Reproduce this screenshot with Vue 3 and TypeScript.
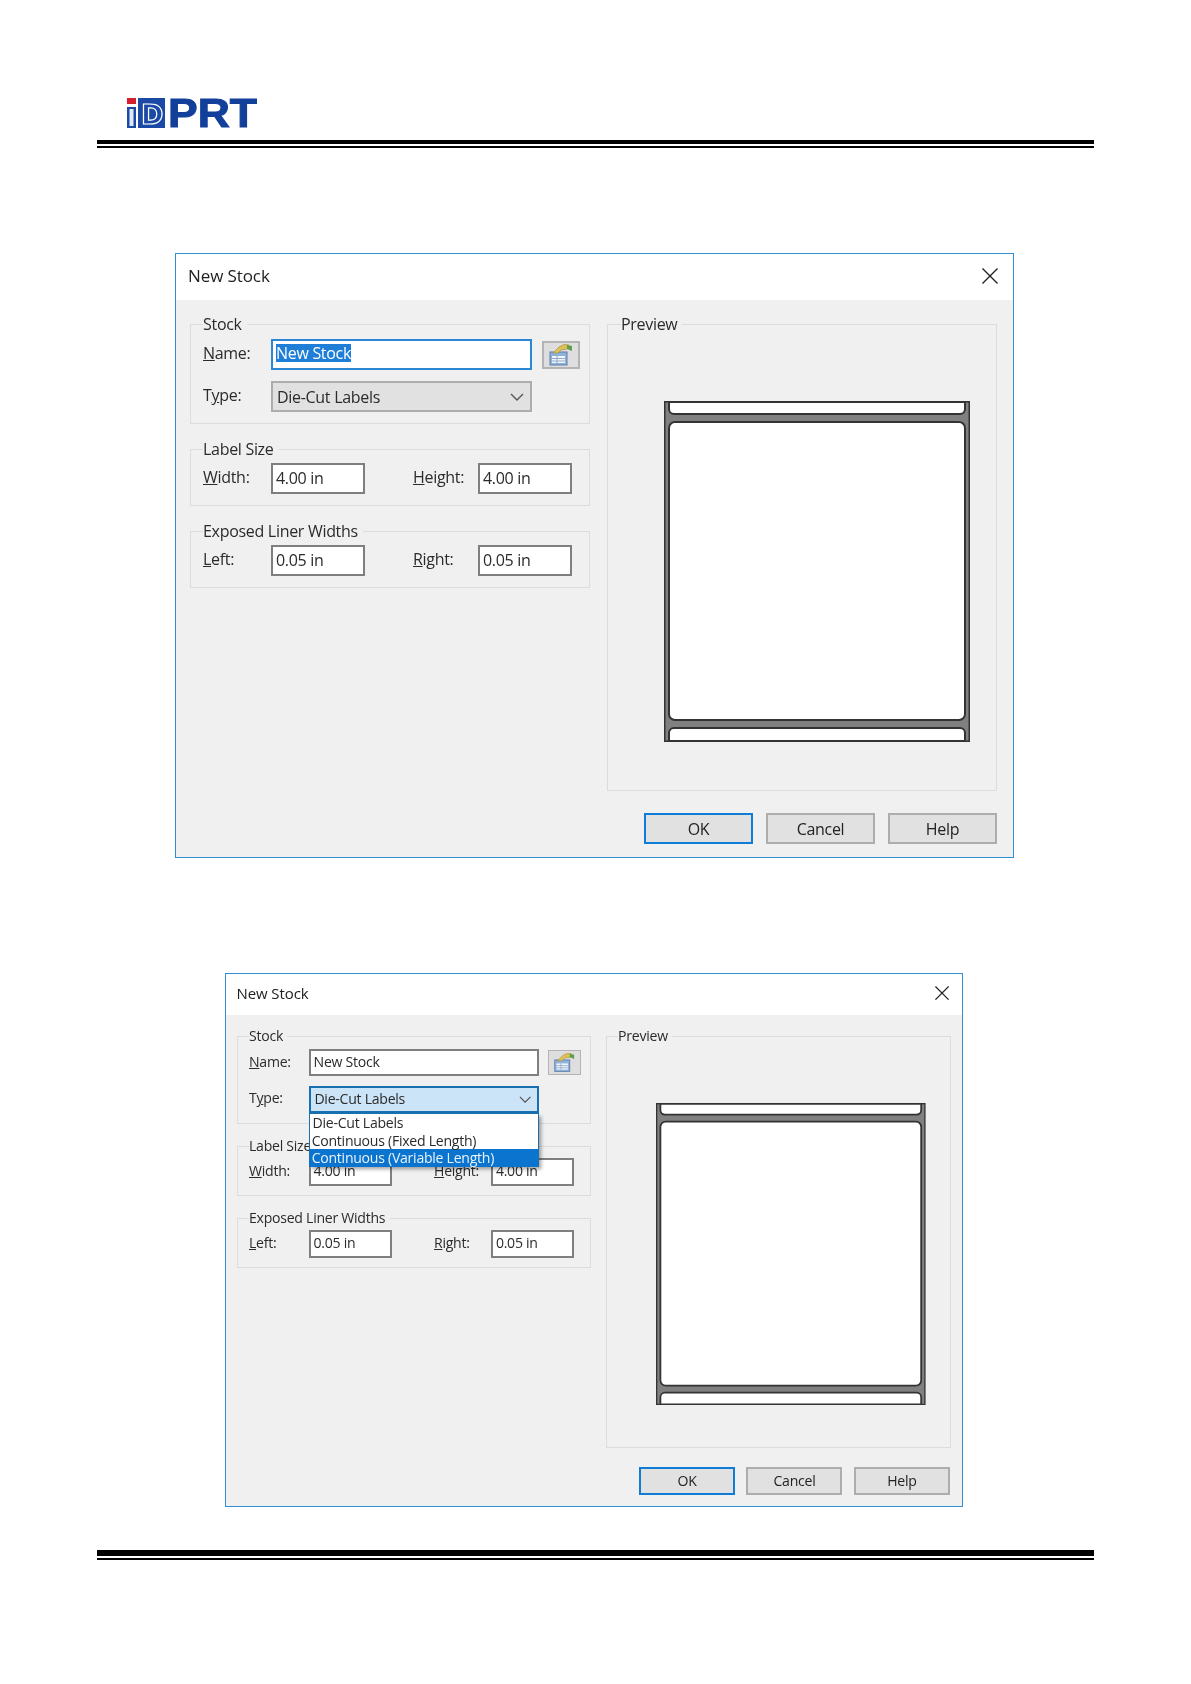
<script setup lang="ts">
interface DialogCfg { key: string; open: boolean }
const dialogs: DialogCfg[] = [
  { key: 'large', open: false },
  { key: 'small', open: true },
]
const sizeFields = [
  { title: 'Label Size', a: 'W', aRest: 'idth:', b: 'H', bRest: 'eight:', val: '4.00 in' },
  { title: 'Exposed Liner Widths', a: 'L', aRest: 'eft:', b: 'R', bRest: 'ight:', val: '0.05 in' },
]
</script>

<template>
  <div class="page">
    <header class="head">
      <svg class="logo" width="132" height="32" viewBox="0 0 132 32">
        <rect x="1" y="1" width="9" height="6" fill="#d3202c" />
        <rect x="1" y="10" width="9" height="21" fill="#1a4aa5" />
        <rect x="3.5" y="12" width="4" height="17" fill="#dfe8f6" />
        <rect x="12" y="1" width="27" height="30" fill="#1a4aa5" />
        <text x="15" y="27" class="logo-d">D</text>
        <text x="42" y="30" class="logo-prt" textLength="89" lengthAdjust="spacingAndGlyphs">PRT</text>
      </svg>
      <div class="rule-thick"></div>
      <div class="rule-thin"></div>
    </header>

    <div v-for="d in dialogs" :key="d.key" class="slot" :class="'slot-' + d.key">
      <section class="dialog" :class="'dialog-' + d.key">
        <div class="titlebar">
          <span class="title">New Stock</span>
          <svg class="close" width="16" height="16" viewBox="0 0 16 16">
            <path d="M0.5 0.5 L15.5 15.5 M15.5 0.5 L0.5 15.5" stroke="#222" stroke-width="1.4" fill="none" />
          </svg>
        </div>
        <div class="body">
          <div class="left">
            <div class="group group-stock">
              <div class="legend">Stock</div>
              <div class="stock-grid">
                <div class="lbl"><u>N</u>ame:</div>
                <div class="field" :class="{ focused: !d.open }">
                  <span :class="{ sel: !d.open }">New Stock</span>
                </div>
                <button class="iconbtn" type="button" aria-label="Properties">
                  <svg width="26" height="24" viewBox="0 0 26 24">
                    <rect x="2" y="9" width="17" height="13" fill="#8fb2dc" stroke="#5d7ea8" />
                    <rect x="4" y="13" width="13" height="7" fill="#f2f6fb" />
                    <path d="M4 15.5H17M4 18H17M9 13V20" stroke="#8fa9c9" stroke-width="1" />
                    <path d="M5 10 L11 4 Q16 0 21 2 L19 6 L13 7 L10 10 Z" fill="#dcc05a" stroke="#a88a2a" stroke-width="0.6" />
                    <path d="M19 2 L24 3 L24 8 L19 6 Z" fill="#5f9e4a" />
                  </svg>
                </button>
                <div class="lbl">T<u>y</u>pe:</div>
                <div class="combo-wrap">
                  <div class="combo" :class="{ 'combo-open': d.open }">
                    <span>Die-Cut Labels</span>
                    <svg width="14" height="8" viewBox="0 0 14 8">
                      <path d="M1 1 L7 7 L13 1" stroke="#555" stroke-width="1.4" fill="none" />
                    </svg>
                  </div>
                  <ul v-if="d.open" class="menu">
                    <li class="first">Die-Cut Labels</li>
                    <li>Continuous (Fixed Length)</li>
                    <li class="active">Continuous (Variable Length)</li>
                  </ul>
                </div>
              </div>
            </div>

            <div v-for="g in sizeFields" :key="g.title" class="group group-size">
              <div class="legend">{{ g.title }}</div>
              <div class="size-grid">
                <div class="lbl"><u>{{ g.a }}</u>{{ g.aRest }}</div>
                <div class="field">{{ g.val }}</div>
                <span></span>
                <div class="lbl"><u>{{ g.b }}</u>{{ g.bRest }}</div>
                <div class="field">{{ g.val }}</div>
              </div>
            </div>
          </div>

          <div class="group group-preview">
            <div class="legend">Preview</div>
            <svg class="stock-art" width="306" height="341" viewBox="0 0 306 340" preserveAspectRatio="none">
              <rect x="0.75" y="0.75" width="304.5" height="338.5" fill="#808080" stroke="#333" stroke-width="1.5" />
              <path d="M5 1 V8 a5 5 0 0 0 5 5 H296 a5 5 0 0 0 5 -5 V1 Z" fill="#fff" stroke="#333" stroke-width="2" />
              <rect x="5" y="21" width="296" height="297" rx="6" fill="#fff" stroke="#333" stroke-width="2" />
              <path d="M5 339 V331 a5 5 0 0 1 5 -5 H296 a5 5 0 0 1 5 5 V339 Z" fill="#fff" stroke="#333" stroke-width="2" />
            </svg>
          </div>
        </div>
        <div class="actions">
          <button class="btn btn-default" type="button">OK</button>
          <button class="btn" type="button">Cancel</button>
          <button class="btn" type="button">Help</button>
        </div>
      </section>
    </div>

    <footer class="foot">
      <div class="rule-foot"></div>
      <div class="rule-thin-foot"></div>
    </footer>
  </div>
</template>

<style scoped>
.page {
  position: relative;
  width: 1191px;
  height: 1684px;
  background: #fff;
  overflow: hidden;
  font-family: "Open Sans", "Noto Sans", sans-serif;
  color: #2b2b2b;
}
.head {
  padding: 97px 97px 0;
  width: 997px;
}
.logo {
  display: block;
  margin-left: 29px;
  height: 32px;
  overflow: visible;
  filter: blur(0.3px);
}
.logo-d {
  font: 700 27px "DejaVu Sans", sans-serif;
  fill: none;
  stroke: #fff;
  stroke-width: 1.2;
}
.logo-prt {
  font: 700 40px "Liberation Sans", sans-serif;
  fill: #123f9a;
  stroke: #123f9a;
  stroke-width: 1;
}
.rule-thick {
  height: 4px;
  background: #000;
  margin-top: 11px;
}
.rule-thin {
  height: 2px;
  background: #000;
  margin-top: 2px;
}
.slot-large {
  padding: 105px 0 0 175px;
}
.slot-small {
  padding: 115px 0 0 225px;
}
.dialog {
  box-sizing: border-box;
  width: 839px;
  height: 605px;
  background: #f0f0f0;
  border: 1.6px solid #2f8fd3;
  display: flex;
  flex-direction: column;
  position: relative;
  filter: blur(0.35px);
}
.dialog-small {
  zoom: 0.881;
  width: 838px;
  height: 606px;
}
.dialog-small .stock-art {
  height: 343px;
  margin-top: 65px;
}
.dialog-small .group-preview {
  width: 392px;
  height: 468px;
}
.dialog-small .body {
  padding-left: 13px;
  padding-right: 13px;
}
.dialog-small .left {
  width: 401px;
}
.dialog-small .actions {
  padding-right: 14px;
}
.titlebar {
  box-sizing: border-box;
  height: 46px;
  background: #fff;
  display: flex;
  align-items: center;
  justify-content: space-between;
  padding: 0 15px 3px 12px;
  flex: none;
}
.title {
  font-size: 17px;
  letter-spacing: -0.1px;
  color: #222;
}
.body {
  display: flex;
  gap: 17px;
  padding: 24px 16px 0 14px;
  flex: none;
}
.left {
  width: 400px;
  display: flex;
  flex-direction: column;
  gap: 25px;
}
.group {
  box-sizing: border-box;
  border: 1px solid #dcdcdc;
  padding: 0 11px 10px 12px;
}
.legend {
  width: fit-content;
  height: 20px;
  line-height: 18px;
  margin-top: -10px;
  background: #f0f0f0;
  padding-right: 5px;
  font-size: 16px;
  letter-spacing: -0.3px;
  margin-bottom: 3px;
}
.group-stock .legend {
  margin-bottom: 4px;
}
.group-stock {
  height: 100px;
}
.group-size {
  height: 57px;
}
.stock-grid {
  display: grid;
  grid-template-columns: 68px 261px 48px;
  row-gap: 11px;
  align-items: center;
}
.iconbtn {
  margin-left: 10px;
  width: 38px;
  height: 28px;
  box-sizing: border-box;
  background: #dedede;
  border: 2px solid #b4b4b4;
  padding: 0;
  display: flex;
  align-items: center;
  justify-content: center;
}
.size-grid {
  display: grid;
  grid-template-columns: 68px 94px 48px 65px 94px;
  align-items: center;
}
.lbl {
  font-size: 16px;
  letter-spacing: -0.3px;
  line-height: 20px;
  padding-bottom: 3px;
}
.field {
  box-sizing: border-box;
  height: 31px;
  border: 2.3px solid #7f7f7f;
  background: #fff;
  font-size: 16px;
  letter-spacing: -0.3px;
  line-height: 26px;
  padding-left: 3px;
  white-space: nowrap;
}
.field.focused {
  border-color: #2b87d3;
}
.sel {
  background: #1f7fd8;
  color: #fff;
  display: inline-block;
  line-height: 18px;
  vertical-align: 1px;
}
.combo-wrap {
  position: relative;
}
.combo {
  box-sizing: border-box;
  height: 31px;
  border: 2.3px solid #adadad;
  background: #e1e1e1;
  font-size: 16px;
  letter-spacing: -0.3px;
  line-height: 26px;
  padding: 0 6px 0 4px;
  display: flex;
  align-items: center;
  justify-content: space-between;
}
.combo-open {
  background: #cce4f7;
  border-color: #1a6fb0;
}
.menu {
  list-style: none;
  margin: 0;
  padding: 0;
  position: absolute;
  left: 0;
  top: 31px;
  box-sizing: border-box;
  width: 261px;
  height: 61px;
  background: #fff;
  border: 1.2px solid #1a6fb0;
  box-shadow: 3px 3px 4px rgba(0, 0, 0, 0.35);
  font-size: 16px;
  letter-spacing: -0.3px;
  z-index: 2;
}
.menu li {
  height: 20px;
  line-height: 20px;
  padding-left: 2px;
  white-space: nowrap;
}
.menu li.first {
  padding-left: 3px;
}
.menu li.active {
  background: #0a74cf;
  color: #e8f3fc;
}
.group-preview {
  width: 390px;
  height: 467px;
  padding: 0 13px;
}
.stock-art {
  display: block;
  margin: 66px 0 0 43px;
}
.actions {
  display: flex;
  justify-content: flex-end;
  gap: 13px;
  padding: 22px 16px 0;
}
.btn {
  box-sizing: border-box;
  width: 109px;
  height: 31px;
  background: #e1e1e1;
  border: 2.3px solid #adadad;
  font-family: inherit;
  font-size: 16px;
  color: #222;
  letter-spacing: -0.3px;
  padding: 0;
}
.btn-default {
  border-color: #0f7cd6;
}
.foot {
  position: absolute;
  top: 1550px;
  left: 97px;
  width: 997px;
}
.rule-foot {
  height: 6px;
  background: #000;
}
.rule-thin-foot {
  height: 1.5px;
  background: #000;
  margin-top: 2px;
}
</style>
